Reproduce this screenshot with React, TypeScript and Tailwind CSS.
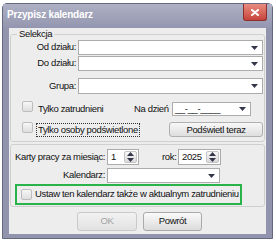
const font = "font-['Liberation_Sans',Arial,sans-serif]"

function Arrow({ up = false }: { up?: boolean }) {
  return (
    <svg width="7" height="4" viewBox="0 0 7 4" className="shrink-0">
      <path d={up ? 'M0 4h7L3.5 0z' : 'M0 0h7L3.5 4z'} fill="#34364a" />
    </svg>
  )
}

function Combo({ className = '', children }: { className?: string; children?: React.ReactNode }) {
  return (
    <div
      className={`flex items-center justify-between border border-[#acacac] bg-white pl-[2px] pr-[4px] ${className}`}
    >
      <span className="leading-none">{children}</span>
      <Arrow />
    </div>
  )
}

function Check() {
  return (
    <span className="inline-block h-[11px] w-[11px] shrink-0 rounded-[2px] border border-[#bdbdbd] bg-gradient-to-b from-[#f7f7f7] to-[#dedede]" />
  )
}

function Spin({ value, className = '' }: { value: string; className?: string }) {
  return (
    <div className={`flex h-[16px] items-stretch border border-[#acacac] bg-white ${className}`}>
      <span className="flex flex-1 items-center pl-[3px] leading-none">{value}</span>
      <div className="m-[1px] flex w-[13px] flex-col items-center justify-center gap-[2px] rounded-[2px] border border-[#c4c4c4] bg-gradient-to-b from-[#f8f8f8] to-[#d9d9d9]">
        <Arrow up />
        <Arrow />
      </div>
    </div>
  )
}

export default function App() {
  return (
    <div
      className={`h-[240px] w-[276px] overflow-hidden whitespace-nowrap bg-white pl-[2px] pt-[3px] text-[9.5px] tracking-[-0.35px] text-[#111] ${font}`}
    >
      <div className="w-[271px] rounded-t-[5px] border border-[#66687e] bg-[#9194ac]">
        {/* title bar */}
        <div className="flex h-[24px] items-start justify-between bg-gradient-to-b from-[#aeb0c5] to-[#9396ae] pl-[4px] pr-[5px]">
          <span className="mt-[6px] text-[10px] font-bold leading-none tracking-[-0.2px] text-white">
            Przypisz kalendarz
          </span>
          <div className="flex h-[17px] w-[24px] items-center justify-center rounded-b-[3px] border border-t-0 border-[#8e2f2b] bg-gradient-to-b from-[#e98b80] to-[#c6423a]">
            <svg width="8" height="7" viewBox="0 0 8 7">
              <path d="M1 1l6 5M7 1L1 6" stroke="white" strokeWidth="2" strokeLinecap="round" />
            </svg>
          </div>
        </div>

        {/* body */}
        <div className="mx-[6px] mb-[4px] bg-[#ededed] px-[1px] pb-[3px]">
          <fieldset className="rounded-[3px] border border-[#cfcfcf] px-[1px] pb-[4px]">
            <legend className="ml-[5px] px-[2px] leading-[12px]">Selekcja</legend>
            <div className="flex items-center">
              <span className="w-[66px] pr-[2px] text-right">Od działu:</span>
              <Combo className="h-[15px] flex-1" />
            </div>
            <div className="mt-[1px] flex items-center">
              <span className="w-[66px] pr-[2px] text-right">Do działu:</span>
              <Combo className="h-[15px] flex-1" />
            </div>
            <div className="mt-[7px] flex items-center">
              <span className="w-[66px] pr-[2px] text-right">Grupa:</span>
              <Combo className="h-[16px] flex-1" />
            </div>
            <div className="mt-[8px] flex h-[14px] items-center">
              <span className="ml-[10px]"><Check /></span>
              <span className="ml-[5px] w-[96px]">Tylko zatrudnieni</span>
              <span className="w-[38px]">Na dzień</span>
              <Combo className="h-[14px] w-[79px]">__-__-____</Combo>
            </div>
            <div className="mt-[6px] flex h-[15px] items-center">
              <span className="ml-[10px]"><Check /></span>
              <span className="ml-[3px] border border-dotted border-[#333] px-[1px] leading-[12px]">
                Tylko osoby podświetlone
              </span>
              <button className="ml-auto h-[15px] w-[94px] rounded-[3px] border border-[#b0b0b0] bg-gradient-to-b from-[#f8f8f8] to-[#dedede] leading-none">
                Podświetl teraz
              </button>
            </div>
          </fieldset>

          <div className="mt-[2px] rounded-[3px] border border-[#cfcfcf] px-[4px] pb-[1px] pt-[4px]">
            <div className="flex items-center">
              <span className="w-[92px]">Karty pracy za miesiąc:</span>
              <Spin value="1" className="w-[32px]" />
              <span className="ml-[23px] w-[16px]">rok:</span>
              <Spin value="2025" className="w-[43px]" />
            </div>
            <div className="mt-[3px] flex items-center">
              <span className="w-[92px] pr-[2px] text-right">Kalendarz:</span>
              <Combo className="h-[15px] w-[113px]" />
            </div>
            <div className="mt-[1px] flex h-[21px] w-[227px] items-center border-2 border-[#28b34b] pl-[4px]">
              <Check />
              <span className="ml-[3px]">Ustaw ten kalendarz także w aktualnym zatrudnieniu</span>
            </div>
          </div>

          <div className="mt-[5px] flex justify-center gap-[6px] pl-[4px]">
            <button className="h-[19px] w-[60px] rounded-[3px] border border-[#cacaca] bg-gradient-to-b from-[#f2f2f2] to-[#e2e2e2] text-[#a3a3a3]">
              OK
            </button>
            <button className="h-[19px] w-[59px] rounded-[3px] border border-[#aaaaaa] bg-gradient-to-b from-[#fafafa] to-[#dcdcdc]">
              Powrót
            </button>
          </div>
        </div>
      </div>
    </div>
  )
}
